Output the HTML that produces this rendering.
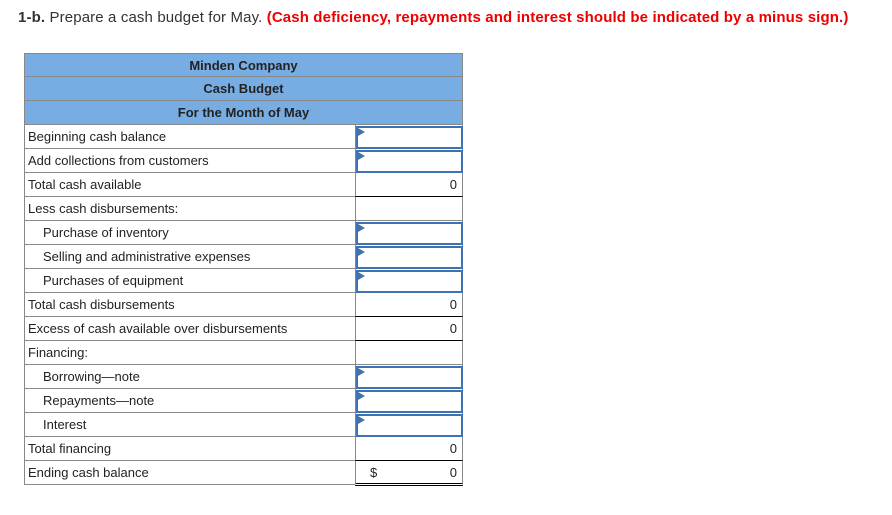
<!DOCTYPE html>
<html><head><style>
body{margin:0;width:892px;height:515px;background:#fff;font-family:"Liberation Sans",Arial,sans-serif;position:relative;overflow:hidden}
.t{position:absolute;left:18px;top:9px;font-size:15px;color:#333;white-space:nowrap;letter-spacing:0.13px}
.t b.r{color:#e00}
.c{position:absolute;box-sizing:border-box;font-size:13px;color:#222}
.h{background:#78ade4;border:1px solid #888;border-top:none;text-align:center;line-height:23px;font-weight:bold;font-size:13px;color:#222}
.lab{border-left:1px solid #888;border-bottom:1px solid #888;line-height:24px;padding-left:3px}
.val{border-left:1px solid #888;border-right:1px solid #888;border-bottom:1px solid #888;text-align:right;line-height:24px;padding-right:5px}
.inp{border:2px solid #3f72b3}
.inp:before{content:"";position:absolute;left:0;top:0;border-left:7px solid #3f72b3;border-top:4px solid transparent;border-bottom:4px solid transparent}
.tot{border-bottom:1px solid #000}
</style></head><body>
<div class="t"><b>1-b.</b> Prepare a cash budget for May. <b class="r">(Cash deficiency, repayments and interest should be indicated by a minus sign.)</b></div>
<div class="c h" style="left:24px;top:53px;width:439px;height:24px;border-top:1px solid #888">Minden Company</div>
<div class="c h" style="left:24px;top:77px;width:439px;height:24px">Cash Budget</div>
<div class="c h" style="left:24px;top:101px;width:439px;height:24px">For the Month of May</div>
<div id="rows"></div>
<script>
var R=[["Beginning cash balance",0,"i"],["Add collections from customers",0,"i"],["Total cash available",0,"0"],["Less cash disbursements:",0,""],["Purchase of inventory",1,"i"],["Selling and administrative expenses",1,"i"],["Purchases of equipment",1,"i"],["Total cash disbursements",0,"0"],["Excess of cash available over disbursements",0,"0"],["Financing:",0,""],["Borrowing\u2014note",1,"i"],["Repayments\u2014note",1,"i"],["Interest",1,"i"],["Total financing",0,"0"],["Ending cash balance",0,"$"]];
var h="";
R.forEach(function(r,i){var y=125+24*i;
h+='<div class="c lab" style="left:24px;top:'+y+'px;width:331px;height:24px;padding-left:'+(r[1]?18:3)+'px">'+r[0]+'</div>';
if(r[2]=="i"){h+='<div class="c val" style="left:355px;top:'+y+'px;width:108px;height:24px"></div><div class="c inp" style="left:356px;top:'+(y+1)+'px;width:107px;height:23px"></div>';}
else if(r[2]=="0"){h+='<div class="c val tot" style="left:355px;top:'+y+'px;width:108px;height:24px">0</div>';}
else if(r[2]=="$"){h+='<div class="c val" style="left:355px;top:'+y+'px;width:108px;height:25px;border-bottom:3px double #000">0<span style="position:absolute;left:14px">$</span></div>';}
else{h+='<div class="c val" style="left:355px;top:'+y+'px;width:108px;height:24px"></div>';}
});
document.getElementById("rows").innerHTML=h;
</script>
</body></html>
